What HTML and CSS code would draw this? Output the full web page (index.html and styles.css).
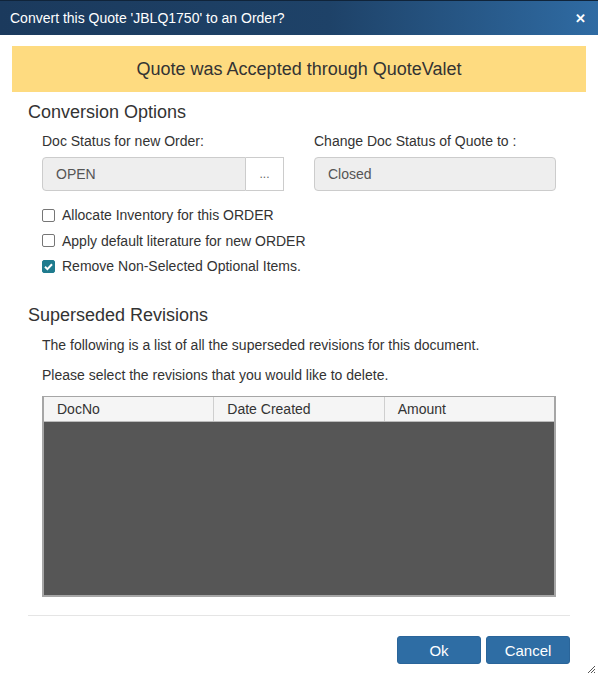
FILE: index.html
```html
<!DOCTYPE html>
<html>
<head>
<meta charset="utf-8">
<link rel="stylesheet" href="styles.css">
</head>
<body>
<div class="dialog">
  <div class="titlebar">
    <span class="title">Convert this Quote 'JBLQ1750' to an Order?</span>
    <span class="close">&#x2715;</span>
  </div>
  <div class="banner">Quote was Accepted through QuoteValet</div>
  <h2 class="heading first">Conversion Options</h2>
  <div class="fields">
    <div class="field">
      <label class="label">Doc Status for new Order:</label>
      <div class="input-group">
        <div class="input">OPEN</div>
        <div class="dots">...</div>
      </div>
    </div>
    <div class="field">
      <label class="label">Change Doc Status of Quote to :</label>
      <div class="input full">Closed</div>
    </div>
  </div>
  <div class="checks">
    <div class="check"><span class="box"></span>Allocate Inventory for this ORDER</div>
    <div class="check"><span class="box"></span>Apply default literature for new ORDER</div>
    <div class="check"><span class="box checked"><svg width="13" height="13" viewBox="0 0 13 13"><path d="M3 6.8 L5.4 9.1 L10 4.2" fill="none" stroke="#fff" stroke-width="2"/></svg></span>Remove Non-Selected Optional Items.</div>
  </div>
  <h2 class="heading second">Superseded Revisions</h2>
  <p class="text t1">The following is a list of all the superseded revisions for this document.</p>
  <p class="text t2">Please select the revisions that you would like to delete.</p>
  <div class="grid">
    <div class="grid-head">
      <div class="col">DocNo</div>
      <div class="col">Date Created</div>
      <div class="col last">Amount</div>
    </div>
    <div class="grid-body"></div>
  </div>
  <div class="sep"></div>
  <div class="footer">
    <button class="btn">Ok</button>
    <button class="btn">Cancel</button>
  </div>
  <svg class="resize" width="10" height="10" viewBox="0 0 10 10"><path d="M9 2 L2 9 M9 5 L5 9 M9 8 L8 9" stroke="#555" stroke-width="1"/></svg>
</div>
</body>
</html>
```
FILE: styles.css
```css
* { box-sizing: border-box; }
body {
  margin: 0;
  background: #fff;
  font-family: "Liberation Sans", Arial, sans-serif;
  color: #333;
}
.dialog {
  position: relative;
  width: 598px;
  height: 676px;
  background: #fff;
}
.titlebar {
  height: 35px;
  border-top: 1px solid #10243a;
  background: linear-gradient(to right, #1b3a5d 0%, #1e4268 55%, #2f6ba3 100%);
  display: flex;
  align-items: center;
  justify-content: space-between;
  padding: 0 12px 0 10px;
  color: #fff;
}
.title { font-size: 14px; }
.close { font-size: 13px; font-weight: bold; }
.banner {
  margin: 11px 12px 0;
  height: 46px;
  background: #fedb80;
  display: flex;
  align-items: center;
  justify-content: center;
  font-size: 18px;
  color: #333;
}
.heading {
  margin: 0;
  padding-left: 28px;
  font-size: 18px;
  font-weight: normal;
  line-height: 20px;
  color: #333;
}
.heading.first { margin-top: 10px; }
.heading.second { margin-top: 29px; }
.fields {
  display: flex;
  gap: 30px;
  padding-left: 42px;
  margin-top: 9px;
}
.field { width: 242px; }
.label {
  display: block;
  font-size: 14px;
  line-height: 20px;
  color: #333;
  margin-bottom: 6px;
}
.input-group { display: flex; width: 242px; }
.input {
  flex: 1;
  height: 34px;
  background: #eee;
  border: 1px solid #ccc;
  border-radius: 4px 0 0 4px;
  font-size: 14px;
  color: #555;
  padding-left: 13px;
  display: flex;
  align-items: center;
}
.input.full { border-radius: 4px; width: 242px; }
.dots {
  width: 38px;
  height: 34px;
  border: 1px solid #ccc;
  border-left: none;
  background: #fff;
  font-size: 12px;
  color: #666;
  display: flex;
  align-items: center;
  justify-content: center;
}
.checks {
  padding-left: 42px;
  margin-top: 14px;
  display: flex;
  flex-direction: column;
  gap: 5.5px;
}
.check {
  display: flex;
  align-items: center;
  height: 20px;
  font-size: 14px;
  color: #333;
}
.box {
  width: 13px;
  height: 13px;
  border: 1px solid #767676;
  border-radius: 2px;
  margin-right: 7px;
  background: #fff;
  display: flex;
}
.box.checked {
  background: #1f7b8e;
  border-color: #1f7b8e;
}
.box.checked svg { margin: -1px; }
.text {
  margin: 0;
  padding-left: 42px;
  font-size: 14px;
  line-height: 20px;
  color: #333;
}
.t1 { margin-top: 10px; }
.t2 { margin-top: 10px; }
.grid {
  margin: 11px 0 0 42px;
  width: 514px;
  height: 201px;
  border: 2px solid #a6a6a6;
  border-top-width: 1px;
  display: flex;
  flex-direction: column;
}
.grid-head {
  display: flex;
  height: 25px;
  background: #f5f5f5;
  border-bottom: 1px solid #bbb;
}
.col {
  flex: 1;
  font-size: 14px;
  color: #333;
  padding-left: 13px;
  display: flex;
  align-items: center;
  border-right: 1px solid #cfcfcf;
}
.col.last { border-right: none; }
.grid-body { flex: 1; background: #565656; }
.sep {
  margin: 18px 28px 0;
  height: 1px;
  background: #e5e5e5;
}
.footer {
  display: flex;
  justify-content: flex-end;
  gap: 5px;
  padding-right: 28px;
  margin-top: 20px;
}
.btn {
  width: 84px;
  height: 28px;
  border: 1px solid #2a659a;
  border-radius: 3px;
  background: #2e6da4;
  color: #fff;
  font-family: "Liberation Sans", Arial, sans-serif;
  font-size: 15px;
  padding: 0;
}
.resize {
  position: absolute;
  right: 2px;
  bottom: 2px;
}
```
